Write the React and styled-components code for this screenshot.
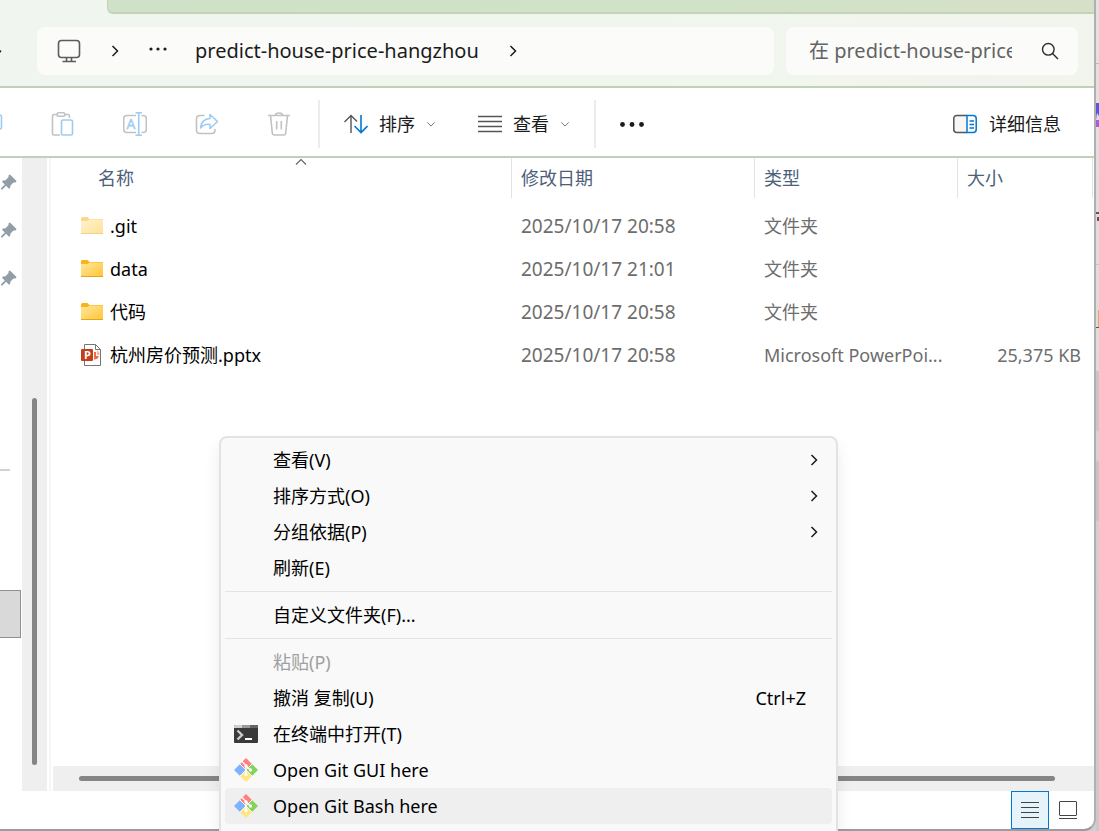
import React, { useState } from "react";
import styled, { createGlobalStyle } from "styled-components";

const files = [
  { name: ".git", date: "2025/10/17 20:58", type: "文件夹", size: "", icon: "hidden" },
  { name: "data", date: "2025/10/17 21:01", type: "文件夹", size: "", icon: "folder" },
  { name: "代码", date: "2025/10/17 20:58", type: "文件夹", size: "", icon: "folder" },
  { name: "杭州房价预测.pptx", date: "2025/10/17 20:58", type: "Microsoft PowerPoi...", size: "25,375 KB", icon: "pptx" },
];

const menuGroups = [
  [
    { label: "查看(V)", sub: true },
    { label: "排序方式(O)", sub: true },
    { label: "分组依据(P)", sub: true },
    { label: "刷新(E)" },
  ],
  [{ label: "自定义文件夹(F)..." }],
  [
    { label: "粘贴(P)", disabled: true },
    { label: "撤消 复制(U)", shortcut: "Ctrl+Z" },
    { label: "在终端中打开(T)", icon: "terminal" },
    { label: "Open Git GUI here", icon: "git" },
    { label: "Open Git Bash here", icon: "git", active: true },
  ],
];

function Chevron({ dir = "right", size = 12, color = "#1b1b1b", width = 1.5 }) {
  const paths = {
    right: "M3.5 1 L8.5 6 L3.5 11",
    down: "M1.5 4 L6 8.5 L10.5 4",
    up: "M1 8.5 L6 3.5 L11 8.5",
  };
  return (
    <svg width={size} height={size} viewBox="0 0 12 12" fill="none" stroke={color} strokeWidth={width} aria-hidden="true">
      <path d={paths[dir]} />
    </svg>
  );
}

function FolderIcon({ faded }) {
  return (
    <svg width="24" height="24" viewBox="0 0 24 24" opacity={faded ? 0.5 : 1} aria-hidden="true">
      <defs>
        <linearGradient id="folderFront" x1="0" y1="0" x2="1" y2="1">
          <stop offset="0" stopColor="#ffe7a0" />
          <stop offset="1" stopColor="#ffc533" />
        </linearGradient>
      </defs>
      <path d="M1 4.5 Q1 3 2.500 3 H7.500 L9.500 5 H23 V10 H1 Z" fill="#f9b515" />
      <path d="M1 7 H7.500 L9.500 5.500 H23 V20 H1 Z" fill="url(#folderFront)" />
      <path d="M1 19.500 H23" stroke="#e5a41c" />
    </svg>
  );
}

function PptxIcon() {
  return (
    <svg width="24" height="24" viewBox="0 0 24 24" aria-hidden="true">
      <path d="M4.500 1.500 H15.500 L20.500 6.500 V22.500 H4.500 Z" fill="#fff" stroke="#757575" />
      <path d="M15.500 1.500 V6.500 H20.500" fill="none" stroke="#757575" />
      <path d="M14 9 H16 V13 H19 A5 5 0 0 1 14 16.500 Z" fill="#ed6c47" />
      <path d="M17 7.500 A4 4 0 0 1 19.500 12 H17 Z" fill="#ffb39b" />
      <rect x="1" y="6" width="12" height="12" rx="1" fill="#c43e1c" />
      <text x="4" y="16" fontSize="11" fontWeight="700" fill="#fff" fontFamily="Open Sans, sans-serif">P</text>
    </svg>
  );
}

function TerminalIcon() {
  return (
    <svg width="24" height="24" viewBox="0 0 24 24" aria-hidden="true">
      <rect y="3" width="24" height="18" rx="1" fill="#3a3a3a" />
      <path d="M0 6 V4 Q0 3 1 3 H8 V6 Z" fill="#cfcfcf" />
      <path d="M8 3 H16 V6 H8 Z" fill="#999" />
      <path d="M16 3 H23 Q24 3 24 4 V6 H16 Z" fill="#666" />
      <path d="M3.500 8.500 L8 13 L3.500 17.500" fill="none" stroke="#ccc" strokeWidth="2.400" />
      <path d="M11 17 H18" stroke="#fff" strokeWidth="2" />
    </svg>
  );
}

function GitIcon() {
  return (
    <svg width="24" height="24" viewBox="0 0 24 24" aria-hidden="true">
      <path d="M12 0 L18 6 L12 12 L6 6 Z" fill="#ff8080" />
      <path d="M18 6 L24 12 L18 18 L12 12 Z" fill="#80d45a" />
      <path d="M12 12 L18 18 L12 24 L6 18 Z" fill="#ffe680" />
      <path d="M6 6 L12 12 L6 18 L0 12 Z" fill="#80b3ff" />
      <g stroke="#fff" fill="none">
        <path d="M5.500 5.500 L18.500 18.500 M18.500 5.500 L5.500 18.500" strokeWidth="0.900" />
        <path d="M8 3.500 L12 7.500 V17 M12 8 L16.500 12" strokeWidth="1.300" />
      </g>
      <g fill="#fff">
        <circle cx="12" cy="8" r="1.700" />
        <circle cx="16.500" cy="12" r="1.700" />
        <circle cx="12" cy="16.500" r="1.700" />
      </g>
    </svg>
  );
}

function PinIcon() {
  return (
    <svg width="17" height="16" viewBox="-1 0 17 16" fill="#929da5" aria-hidden="true">
      <path d="M9 0.500 L15.500 7 L14.500 8.500 L12.500 8.500 L9.500 11.500 L9 14.500 L7.800 14.500 L5 11.800 L1.300 15.500 H0 V14.300 L3.800 10.500 L1.300 8 V6.800 L4.500 6.300 L7.500 3.300 V1.500 Z" />
    </svg>
  );
}

const icons = { hidden: <FolderIcon faded />, folder: <FolderIcon />, pptx: <PptxIcon />, terminal: <TerminalIcon />, git: <GitIcon /> };

const actions = [
  {
    label: "复制",
    icon: <rect x="13" y="3" width="9.500" height="14" rx="2" stroke="#9ecbf0" />,
  },
  {
    label: "粘贴",
    icon: (
      <>
        <path d="M9 23 H3 Q1.500 23 1.500 21.500 V4 Q1.500 2.500 3 2.500 H6 M14 2.500 H17 Q18.500 2.500 18.500 4 V6" stroke="#c2c2c2" />
        <rect x="6" y="0.800" width="8" height="3.400" rx="1.700" stroke="#c2c2c2" />
        <rect x="10.500" y="8" width="11" height="15" rx="1.500" stroke="#9ecbf0" />
      </>
    ),
  },
  {
    label: "重命名",
    icon: (
      <>
        <path d="M13 20.500 H4 Q0.700 20.500 0.700 17.500 V6.500 Q0.700 3.500 4 3.500 H13 M18.500 3.500 H20 Q23.300 3.500 23.300 6.500 V17.500 Q23.300 20.500 20 20.500 H18.500" stroke="#c2c2c2" />
        <path d="M12.500 0.700 H19 M12.500 23.300 H19 M15.700 0.700 V23.300" stroke="#9ecbf0" />
        <text x="3.500" y="17" fontSize="14" fill="#9ecbf0" stroke="#9ecbf0" strokeWidth="0.400" fontFamily="Open Sans, sans-serif">A</text>
      </>
    ),
  },
  {
    label: "共享",
    icon: (
      <>
        <path d="M9.500 3.500 H5 Q1.500 3.500 1.500 7 V18 Q1.500 21.500 5 21.500 H16.500 Q20 21.500 20 18 V17" stroke="#c2c2c2" />
        <path d="M15 2.500 L22.500 9.500 L15 16.500 V12.500 Q9.500 11.500 5.500 16 Q6.500 7 15 6.500 Z" stroke="#9ecbf0" strokeLinejoin="round" />
      </>
    ),
  },
  {
    label: "删除",
    icon: (
      <path d="M1 3.500 H23 M8.500 3.500 Q8.500 1 12 1 Q15.500 1 15.500 3.500 M3.500 3.500 L5.300 21 Q5.500 23 7.500 23 H16.500 Q18.500 23 18.700 21 L20.500 3.500 M9.700 9 V17.500 M14.300 9 V17.500" stroke="#c2c2c2" />
    ),
  },
];

export default function App() {
  const [selected, setSelected] = useState(undefined);
  const [view, setView] = useState("details");

  return (
    <Desktop>
      <GlobalStyle />
      <Window>
        <TitleBar>
          <Tab />
        </TitleBar>
        <AddressBar>
          <NavButton aria-label="上一级">
            <svg width="2" height="12" viewBox="0 0 2 12"><path d="M0 5 L1.500 6 L0 8 Z" fill="#1b1b1b" /></svg>
          </NavButton>
          <Breadcrumb aria-label="路径">
            <CrumbButton aria-label="此电脑">
              <svg width="24" height="24" viewBox="0 0 24 24" fill="none" stroke="#5c5c5c" strokeWidth="1.600">
                <rect x="1.500" y="1.500" width="21" height="17" rx="3" />
                <path d="M5.500 22.500 H19 M9.500 19 V22 M14.500 19 V22" />
              </svg>
            </CrumbButton>
            <Chevron />
            <CrumbButton aria-label="更多路径">
              <svg width="18" height="10" viewBox="0 0 18 10" fill="#1b1b1b">
                <circle cx="2" cy="3" r="1.600" /><circle cx="9" cy="3" r="1.600" /><circle cx="16" cy="3" r="1.600" />
              </svg>
            </CrumbButton>
            <CrumbButton>predict-house-price-hangzhou</CrumbButton>
            <Chevron />
          </Breadcrumb>
          <SearchBox>
            <input type="text" aria-label="搜索" placeholder="在 predict-house-price-hangzhou 中搜索" />
            <button aria-label="开始搜索">
              <svg width="18" height="18" viewBox="0 0 18 18" fill="none" stroke="#2b2b2b" strokeWidth="1.400">
                <circle cx="7.300" cy="7.300" r="5.800" />
                <path d="M11.500 11.500 L17 17" />
              </svg>
            </button>
          </SearchBox>
        </AddressBar>
        <Toolbar>
          <Actions>
            {actions.map((action) => (
              <ActionButton key={action.label} aria-label={action.label} disabled>
                <svg width="24" height="24" viewBox="0 0 24 24" fill="none" strokeWidth="1.600">{action.icon}</svg>
              </ActionButton>
            ))}
          </Actions>
          <Separator />
          <ToolButton>
            <svg width="24" height="24" viewBox="0 0 24 24" fill="none" strokeWidth="1.400">
              <path d="M7 21 V3.500 M0.500 10 L7 3.500 L13 9.500" stroke="#555" />
              <path d="M17 3 V20.500 M10.500 14 L17 20.500 L23.500 14" stroke="#0078d4" strokeWidth="1.600" />
            </svg>
            排序
            <Chevron dir="down" size={10} color="#777" width={1.2} />
          </ToolButton>
          <ToolButton>
            <svg width="24" height="24" viewBox="0 0 24 24" stroke="#555" strokeWidth="1.400">
              <path d="M0 4.500 H24 M0 9.500 H24 M0 14.500 H24 M0 19.500 H24" />
            </svg>
            查看
            <Chevron dir="down" size={10} color="#777" width={1.2} />
          </ToolButton>
          <Separator />
          <ToolButton aria-label="更多">
            <svg width="24" height="6" viewBox="0 0 24 6" fill="#1b1b1b">
              <circle cx="2.500" cy="3.500" r="2.400" /><circle cx="12" cy="3.500" r="2.400" /><circle cx="21.500" cy="3.500" r="2.400" />
            </svg>
          </ToolButton>
          <DetailsButton>
            <svg width="24" height="24" viewBox="0 0 24 24" fill="none" strokeWidth="1.500">
              <path d="M14 3.500 H4 Q0.800 3.500 0.800 6.500 V17.500 Q0.800 20.500 4 20.500 H14" stroke="#555" fill="#f7f7f7" />
              <path d="M14 3.500 H20 Q23.200 3.500 23.200 6.500 V17.500 Q23.200 20.500 20 20.500 H14 Z" stroke="#0078d4" />
              <path d="M16.500 9 H21 M16.500 12.500 H21 M16.500 16 H21" stroke="#0078d4" />
            </svg>
            详细信息
          </DetailsButton>
        </Toolbar>
        <Body>
          <NavPane>
            <PinRow><PinIcon /></PinRow>
            <PinRow><PinIcon /></PinRow>
            <PinRow><PinIcon /></PinRow>
            <NavDivider />
            <NavSelected />
          </NavPane>
          <VerticalScroll><i /></VerticalScroll>
          <Splitter />
          <Content>
            <FileTable>
              <colgroup>
                <col />
                <col width="243" />
                <col width="203" />
                <col width="135" />
              </colgroup>
              <thead>
                <tr>
                  <th className="name">
                    名称
                    <SortMark><Chevron dir="up" color="#666" width={1.2} /></SortMark>
                  </th>
                  <th>修改日期</th>
                  <th>类型</th>
                  <th>大小</th>
                </tr>
              </thead>
              <tbody>
                {files.map((file, index) => (
                  <tr key={file.name} className={index === selected ? "selected" : ""} onClick={() => setSelected(index)}>
                    <td>
                      <FileName>
                        {icons[file.icon]}
                        {file.name}
                      </FileName>
                    </td>
                    <td className="date">{file.date}</td>
                    <td>{file.type}</td>
                    <td className="size">{file.size}</td>
                  </tr>
                ))}
              </tbody>
            </FileTable>
            <HorizontalScroll><i /></HorizontalScroll>
          </Content>
        </Body>
        <StatusBar>
          <ViewButton aria-label="详细信息视图" $on={view === "details"} onClick={() => setView("details")}>
            <svg width="18" height="18" viewBox="0 0 18 18" stroke="#444">
              <path d="M0 1.500 H18 M0 6.500 H18 M0 11.500 H18 M0 16.500 H18" />
            </svg>
          </ViewButton>
          <ViewButton aria-label="大图标视图" $on={view === "large"} onClick={() => setView("large")}>
            <svg width="18" height="18" viewBox="0 0 18 18" fill="none" stroke="#444">
              <rect x="0.500" y="0.500" width="17" height="14" rx="0.500" />
              <path d="M0 17.500 H18" />
            </svg>
          </ViewButton>
        </StatusBar>
      </Window>
      <Behind>
        <svg width="3" height="340" viewBox="0 0 3 340" aria-hidden="true">
          <rect y="63" width="3" height="1" fill="#bbb" />
          <rect y="103" width="3" height="18" fill="#5b56e0" />
          <path d="M0 120 L1 113 L3 116 V120 Z" fill="#ddd" />
          <rect y="120" width="3" height="7" fill="#a65fd8" />
          <rect y="212" width="3" height="2" fill="#5a5470" />
          <rect x="1" y="217" width="2" height="4" fill="#7a4a50" />
          <rect y="264" width="3" height="1" fill="#c4c4c4" />
          <rect x="2" y="310" width="1" height="17" fill="#e8a560" />
          <rect y="327" width="3" height="1" fill="#5a5470" />
        </svg>
      </Behind>
      <Menu role="menu">
        {menuGroups.map((group, index) => (
          <MenuGroup key={index}>
            {group.map((item) => (
              <MenuItem key={item.label} role="menuitem" disabled={item.disabled} $active={item.active}>
                <span className="icon">{icons[item.icon]}</span>
                <span className="label">{item.label}</span>
                {item.shortcut && <span className="shortcut">{item.shortcut}</span>}
                {item.sub && <Chevron />}
              </MenuItem>
            ))}
          </MenuGroup>
        ))}
      </Menu>
    </Desktop>
  );
}

const GlobalStyle = createGlobalStyle`
  * {
    box-sizing: border-box;
  }
  body {
    margin: 0;
  }
  body, button, input {
    font-family: "Noto Sans", "Noto Sans CJK SC", sans-serif;
    font-size: 18px;
    line-height: 24px;
  }
  button {
    border: none;
    background: none;
    padding: 0;
    color: inherit;
    display: flex;
    align-items: center;
    white-space: nowrap;
  }
  svg {
    display: block;
    flex-shrink: 0;
  }
`;

const Desktop = styled.div`
  position: relative;
  display: flex;
  height: 100vh;
  overflow: hidden;
  background-color: #cfcfcf;
  color: #1b1b1b;
`;

const Window = styled.div`
  flex: 1;
  min-width: 0;
  display: flex;
  flex-direction: column;
  overflow: hidden;
  background-color: #fff;
  border-right: 2px solid #b0b0b0;
  border-bottom: 2px solid #9c9c9c;
  border-bottom-right-radius: 12px;
`;

const Behind = styled.div`
  width: 3px;
  background: linear-gradient(#e3e1e3 0, #dcdcdc 370px, #c6c6c6 372px, #c6c6c6 430px, #d4d4d4 432px, #d4d4d4 460px, #c4c4c4 462px, #c4c4c4 520px, #d0d0d0 522px, #c9c9c9 100%);
`;

const TitleBar = styled.div`
  height: 14px;
  padding-left: 107px;
  background-color: #f0f6ef;
`;

const Tab = styled.div`
  height: 14px;
  background: linear-gradient(90deg, #cfe2c7, #d1e3c6 60%, #d5e0c8);
  border-bottom: 2px solid #c3d3b8;
  border-left: 1px solid #c3d3b8;
  border-bottom-left-radius: 6px;
`;

const AddressBar = styled.div`
  display: flex;
  align-items: center;
  height: 74px;
  padding: 2px 16px 0 0;
  background: linear-gradient(90deg, #f0f6ef, #f0f6ee 60%, #f2f4ee);
  border-bottom: 2px solid #c1d0b8;
`;

const NavButton = styled.button`
  width: 37px;
`;

const Breadcrumb = styled.nav`
  flex: 1;
  min-width: 0;
  display: flex;
  align-items: center;
  height: 48px;
  padding-left: 20px;
  gap: 28px;
  border-radius: 8px;
  background-color: #fbfcfa;
`;

const CrumbButton = styled.button`
  font-size: 20px;
`;

const SearchBox = styled.div`
  display: flex;
  align-items: center;
  justify-content: space-between;
  width: 292px;
  height: 48px;
  margin-left: 12px;
  padding: 0 19px 0 23px;
  border-radius: 8px;
  background-color: #fbfcfa;
  input {
    width: 203px;
    padding: 0;
    border: none;
    outline: none;
    background: none;
    font-size: 20px;
  }
  input::placeholder {
    color: #636363;
    opacity: 1;
  }
`;

const Toolbar = styled.div`
  display: flex;
  align-items: center;
  height: 70px;
  padding-bottom: 4px;
  padding-top: 8px;
  border-bottom: 2px solid #c1d0b8;
`;

const Actions = styled.div`
  display: flex;
  margin-left: -45px;
`;

const ActionButton = styled.button`
  width: 72px;
  height: 48px;
  justify-content: center;
`;

const Separator = styled.div`
  width: 2px;
  height: 48px;
  margin: 0 3px;
  background-color: #ececec;
`;

const ToolButton = styled.button`
  height: 48px;
  padding: 0 21px;
  gap: 11px;
`;

const DetailsButton = styled(ToolButton)`
  margin-left: auto;
  padding: 0 33px 0 0;
  gap: 12px;
`;

const Body = styled.div`
  flex: 1;
  min-height: 0;
  display: flex;
`;

const NavPane = styled.div`
  width: 22px;
`;

const PinRow = styled.div`
  display: flex;
  align-items: center;
  height: 48px;
`;

const NavDivider = styled.div`
  width: 10px;
  height: 2px;
  margin: 167px 0 119px;
  background-color: #d2d2d2;
`;

const NavSelected = styled.div`
  width: 21px;
  height: 48px;
  background-color: #d9d9d9;
  border: 1px solid #8f8f8f;
  border-left: none;
`;

const VerticalScroll = styled.div`
  display: flex;
  width: 25px;
  padding: 240px 10px 26px;
  background-color: #efefef;
  i {
    flex: 1;
    border-radius: 3px;
    background-color: #858585;
  }
`;

const Splitter = styled.div`
  width: 2px;
  margin: 0 2px;
  background-color: #f6f6f6;
`;

const Content = styled.div`
  flex: 1;
  min-width: 0;
  display: flex;
  flex-direction: column;
  justify-content: space-between;
`;

const FileTable = styled.table`
  width: calc(100% - 1px);
  table-layout: fixed;
  border-collapse: separate;
  border-spacing: 0;
  color: #6d6d6d;
  th {
    height: 40px;
    padding: 0 0 0 9px;
    text-align: left;
    font-weight: 400;
    color: #4c607a;
    border-right: 1px solid #e3e3e3;
  }
  .name {
    position: relative;
    padding-left: 45px;
  }
  tbody::before {
    content: "";
    display: block;
    height: 6px;
  }
  td {
    height: 43px;
    padding: 0 0 0 9px;
    white-space: nowrap;
  }
  td:first-child {
    padding-left: 27px;
    color: #000;
  }
  .date {
    font-size: 19px;
  }
  .size {
    padding-right: 12px;
    text-align: right;
  }
  .selected {
    background-color: #cce8ff;
  }
`;

const SortMark = styled.span`
  position: absolute;
  top: -2px;
  left: 242px;
`;

const FileName = styled.div`
  display: flex;
  align-items: center;
  gap: 6px;
`;

const HorizontalScroll = styled.div`
  display: flex;
  height: 25px;
  padding: 10px 39px 10px 26px;
  background-color: #efefef;
  i {
    flex: 1;
    border-radius: 3px;
    background-color: #858585;
  }
`;

const StatusBar = styled.div`
  display: flex;
  justify-content: flex-end;
  padding-right: 7px;
`;

const ViewButton = styled.button`
  width: 38px;
  height: 38px;
  justify-content: center;
  border: 1px solid ${(props) => (props.$on ? "#0078d4" : "transparent")};
  background-color: ${(props) => (props.$on ? "#e5f3fb" : "transparent")};
`;

const Menu = styled.div`
  position: absolute;
  top: 436px;
  left: 219px;
  width: 619px;
  padding: 4px;
  border: 2px solid #e3e3e3;
  border-radius: 8px;
  background-color: #f9f9f9;
  box-shadow: 0 8px 16px rgba(0, 0, 0, 0.08);
  color: #000;
`;

const MenuGroup = styled.div`
  & + & {
    margin-top: 5px;
    padding-top: 5px;
    border-top: 1px solid #e3e3e3;
  }
  &:last-child {
    padding-bottom: 40px;
  }
`;

const MenuItem = styled.button`
  width: 100%;
  height: 36px;
  padding-right: 12px;
  border-radius: 4px;
  background-color: ${(props) => (props.$active ? "#efefef" : "transparent")};
  .icon {
    width: 48px;
    padding-left: 9px;
  }
  .label {
    flex: 1;
    text-align: left;
  }
  .shortcut {
    padding-right: 14px;
  }
  &:disabled {
    color: #a0a0a0;
  }
`;
